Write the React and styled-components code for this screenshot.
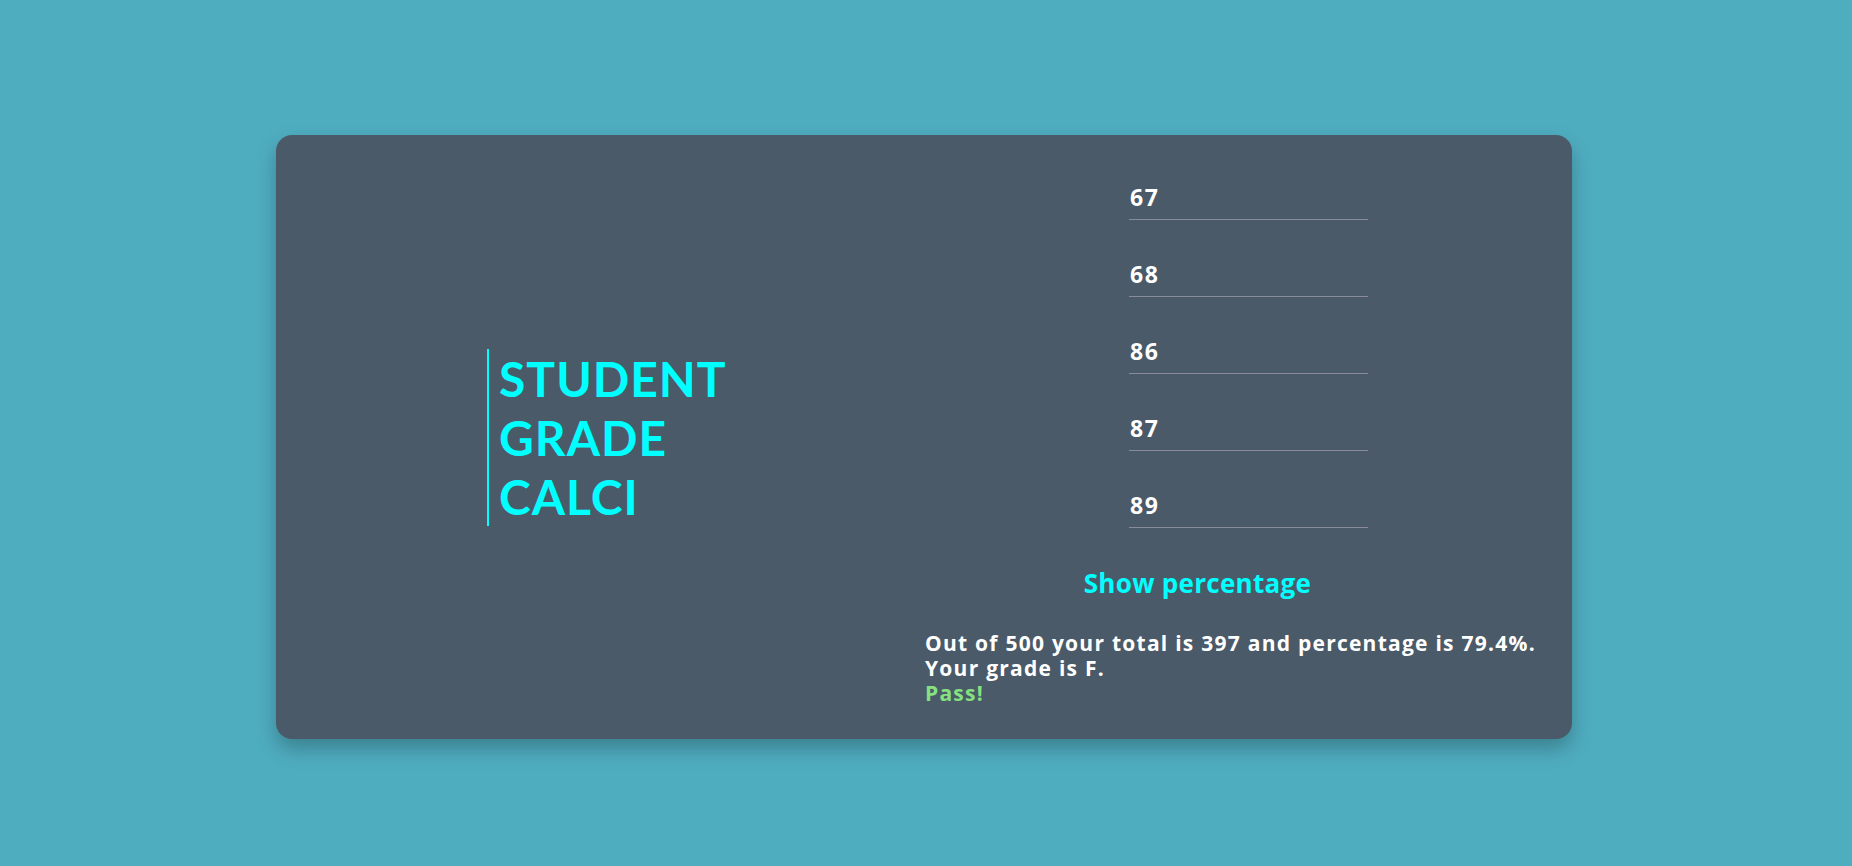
import { useState } from "react";
import styled, { createGlobalStyle } from "styled-components";

const GlobalStyle = createGlobalStyle`
  html, body {
    margin: 0;
    padding: 0;
    background: #4fadc0;
    font-family: "Open Sans", "Noto Sans", sans-serif;
  }
`;

export default function App() {
  const [marks, setMarks] = useState(["67", "68", "86", "87", "89"]);

  function updateMark(index, value) {
    setMarks((prev) => prev.map((m, i) => (i === index ? value : m)));
  }

  return (<>
    <GlobalStyle />
    <Page>
      <Card>
        <TitleColumn>
          <Title>
            STUDENT<br />GRADE<br />CALCI
          </Title>
        </TitleColumn>
        <FormColumn>
          {marks.map((mark, i) => (
            <MarkInput
              key={i}
              value={mark}
              onChange={(e) => updateMark(i, e.target.value)}
            />
          ))}
          <ShowButton>Show percentage</ShowButton>
          <Result>
            <Line>Out of 500 your total is 397 and percentage is 79.4%.</Line>
            <Line>Your grade is F.</Line>
            <Line $pass>Pass!</Line>
          </Result>
        </FormColumn>
      </Card>
    </Page>
  </>);
}

const Page = styled.div`
  width: 1852px;
  height: 866px;
  padding-top: 135px;
  box-sizing: border-box;
`;

const Card = styled.div`
  width: 1296px;
  height: 604px;
  margin-left: 276px;
  background: #4a5a68;
  border-radius: 16px;
  box-shadow: 0px 10px 20px rgba(0, 0, 0, 0.25);
  display: flex;
  box-sizing: border-box;
`;

const TitleColumn = styled.div`
  width: 649px;
  display: flex;
  align-items: center;
  padding-left: 211px;
  box-sizing: border-box;
`;

const Title = styled.h1`
  margin: 0;
  padding-left: 10px;
  border-left: 2px solid #00ffff;
  color: #00ffff;
  font-family: "Lato", sans-serif;
  font-size: 48px;
  line-height: 59px;
  font-weight: 700;
  letter-spacing: 1px;
`;

const FormColumn = styled.div`
  width: 545px;
  padding-top: 45px;
  display: flex;
  flex-direction: column;
  align-items: flex-start;
`;

const MarkInput = styled.input`
  width: 238px;
  height: 33px;
  margin: 0 0 37px 204px;
  padding: 0 0 6px 1px;
  box-sizing: content-box;
  background: transparent;
  border: none;
  border-bottom: 1px solid #8a8d99;
  color: #ffffff;
  font-family: "Open Sans", sans-serif;
  font-size: 23px;
  font-weight: 700;
  letter-spacing: 1.5px;
  outline: none;

  &:last-of-type {
    margin-bottom: 0;
  }
`;

const ShowButton = styled.button`
  align-self: center;
  margin-top: 40px;
  padding: 0;
  background: none;
  border: none;
  color: #00ffff;
  font-family: "Open Sans", sans-serif;
  font-size: 26px;
  line-height: 30px;
  font-weight: 700;
  letter-spacing: 0.3px;
  cursor: pointer;
`;

const Result = styled.div`
  margin-top: 33px;
  display: flex;
  flex-direction: column;
`;

const Line = styled.p`
  margin: 0;
  white-space: nowrap;
  color: ${(p) => (p.$pass ? "#86e07f" : "#ffffff")};
  font-size: 21px;
  line-height: 25px;
  font-weight: 700;
  letter-spacing: 1.25px;
`;
